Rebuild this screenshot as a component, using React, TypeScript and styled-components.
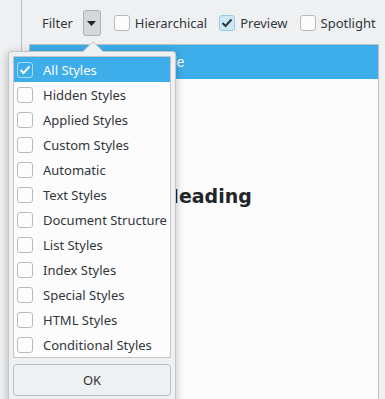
import React from 'react'
import styled, { createGlobalStyle } from 'styled-components'

const GlobalStyle = createGlobalStyle`
  html, body {
    margin: 0;
    padding: 0;
    background: #eff0f1;
  }
  body {
    font-family: "Noto Sans", "DejaVu Sans", sans-serif;
    font-size: 13px;
    color: #31363b;
  }
`

const Window = styled.div`
  position: relative;
  width: 385px;
  height: 399px;
  overflow: hidden;
  display: flex;
  background: #eff0f1;
`

const Gutter = styled.div`
  width: 21px;
  border-right: 1px solid #bcbebf;
  flex-shrink: 0;
`

const Main = styled.div`
  flex: 1;
  display: flex;
  flex-direction: column;
  min-width: 0;
`

const Toolbar = styled.div`
  height: 44px;
  display: flex;
  align-items: center;
  padding-left: 20px;
  padding-top: 2px;
  box-sizing: border-box;
`

const Label = styled.span`
  white-space: nowrap;
  line-height: 16px;
`

const MenuButton = styled.button`
  width: 18px;
  height: 26px;
  margin: 0 13px 0 10px;
  padding: 0;
  border: 1px solid #aeb0b2;
  border-radius: 3px;
  background: #d6d7d8;
  display: flex;
  align-items: center;
  justify-content: center;
  flex-shrink: 0;
`

const Check = styled.label`
  display: flex;
  align-items: center;
  gap: 5px;
  margin-right: 12px;
`

const Box = styled.span<{ $checked?: boolean; $onSelection?: boolean }>`
  width: 16px;
  height: 16px;
  box-sizing: border-box;
  flex-shrink: 0;
  border-radius: 3px;
  border: 1px solid ${p => (p.$onSelection ? 'rgba(255,255,255,0.55)' : p.$checked ? '#93cdee' : '#b8babc')};
  background: ${p => (p.$onSelection ? 'transparent' : p.$checked ? '#cfe8f7' : '#fcfcfc')};
  display: flex;
  align-items: center;
  justify-content: center;
`

const Panel = styled.div`
  flex: 1;
  margin: 0 6px 0 7px;
  border: 1px solid #bcbebf;
  border-bottom: none;
  background: #fcfcfc;
  display: flex;
  flex-direction: column;
`

const StyleRow = styled.div<{ $selected?: boolean; $indent: number; $big?: boolean; $gap?: number }>`
  height: 34px;
  margin-top: ${p => p.$gap ?? 0}px;
  flex-shrink: 0;
  display: flex;
  align-items: center;
  padding-left: ${p => p.$indent}px;
  background: ${p => (p.$selected ? '#3daee9' : 'transparent')};
  color: ${p => (p.$selected ? '#fcfcfc' : '#232629')};
  font-family: ${p => (p.$big ? '"DejaVu Sans", sans-serif' : '"Liberation Sans", Arial, sans-serif')};
  font-size: ${p => (p.$big ? 19 : 14)}px;
  font-weight: ${p => (p.$big ? 700 : 400)};
  white-space: nowrap;
`

const Popup = styled.div`
  position: absolute;
  left: 8px;
  top: 51px;
  width: 168px;
  height: 360px;
  box-sizing: border-box;
  padding: 4px;
  background: #eff0f1;
  border: 1px solid #c3c5c7;
  border-radius: 3px;
  box-shadow: 0 2px 10px rgba(0, 0, 0, 0.25);
  display: flex;
  flex-direction: column;
  gap: 6px;
`

const Arrow = styled.svg`
  position: absolute;
  left: 73px;
  top: -11px;
`

const List = styled.div`
  border: 1px solid #c3c5c7;
  background: #fcfcfc;
  display: flex;
  flex-direction: column;
`

const Item = styled.div<{ $selected?: boolean }>`
  height: 25px;
  display: flex;
  align-items: center;
  gap: 10px;
  padding-left: 3px;
  background: ${p => (p.$selected ? '#3daee9' : 'transparent')};
  color: ${p => (p.$selected ? '#fcfcfc' : '#31363b')};
  white-space: nowrap;
`

const OkButton = styled.button`
  height: 32px;
  border: 1px solid #bcbebf;
  border-radius: 4px;
  background: #eff0f1;
  font-family: inherit;
  font-size: 13px;
  color: #31363b;
`

const filters = [
  'All Styles',
  'Hidden Styles',
  'Applied Styles',
  'Custom Styles',
  'Automatic',
  'Text Styles',
  'Document Structure',
  'List Styles',
  'Index Styles',
  'Special Styles',
  'HTML Styles',
  'Conditional Styles',
]

function Tick({ color }: { color: string }) {
  return (
    <svg width="12" height="10" viewBox="0 0 12 10">
      <path d="M1.5 5 L4.5 8 L10.5 1.5" fill="none" stroke={color} strokeWidth="2" />
    </svg>
  )
}

export default function App() {
  return (
    <>
      <GlobalStyle />
      <Window>
        <Gutter />
        <Main>
          <Toolbar>
            <Label>Filter</Label>
            <MenuButton>
              <svg width="9" height="5" viewBox="0 0 9 5">
                <path d="M0 0 H9 L4.5 5 Z" fill="#232629" />
              </svg>
            </MenuButton>
            <Check>
              <Box />
              <Label>Hierarchical</Label>
            </Check>
            <Check>
              <Box $checked>
                <Tick color="#31363b" />
              </Box>
              <Label>Preview</Label>
            </Check>
            <Check>
              <Box />
              <Label>Spotlight</Label>
            </Check>
          </Toolbar>
          <Panel>
            <StyleRow $selected $indent={6}>Default Paragraph Style</StyleRow>
            <StyleRow $big $indent={133} $gap={100}>Heading</StyleRow>
          </Panel>
        </Main>
        <Popup>
          <Arrow width="22" height="12" viewBox="0 0 22 12">
            <path d="M0 11.5 L11 0.5 L22 11.5" fill="#eff0f1" stroke="#c3c5c7" />
            <rect x="0" y="11" width="22" height="1" fill="#eff0f1" />
          </Arrow>
          <List>
            {filters.map((name, i) => (
              <Item key={name} $selected={i === 0}>
                <Box $onSelection={i === 0}>{i === 0 && <Tick color="#fcfcfc" />}</Box>
                {name}
              </Item>
            ))}
          </List>
          <OkButton>OK</OkButton>
        </Popup>
      </Window>
    </>
  )
}
